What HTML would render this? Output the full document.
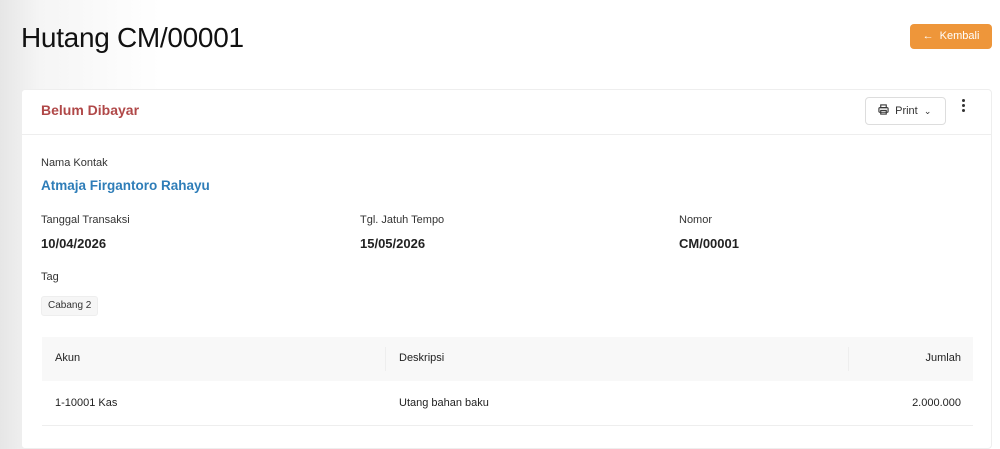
<!DOCTYPE html>
<html><head><meta charset="utf-8"><style>
*{margin:0;padding:0;box-sizing:border-box}
body{width:1000px;height:440px;overflow:hidden;font-family:"Liberation Sans",sans-serif;background:linear-gradient(90deg,#e6e6e6 0px,#f5f5f5 40px,#fff 160px);color:#222;position:relative}
.abs{position:absolute;white-space:nowrap}
h1{position:absolute;left:21px;top:22px;font-size:28px;font-weight:500;color:#111;letter-spacing:-0.3px}
.back{left:910px;top:24px;width:82px;height:25px;background:#ee963a;border-radius:4px;color:#fff;font-size:11px;line-height:25px;text-align:center}
.card{position:absolute;left:21px;top:89px;width:971px;height:360px;background:#fff;border:1px solid #eee;border-radius:4px}
.hdr{position:absolute;left:0;top:0;right:0;height:45px;border-bottom:1px solid #eee}
.lbl{font-size:11px;color:#333}
.val{font-size:13px;font-weight:bold;color:#222}
.print{left:843px;top:7px;width:81px;height:28px;border:1px solid #ddd;border-radius:4px;font-size:11px;line-height:26px;color:#333;padding-left:12px}
.thead{position:absolute;left:20px;top:247px;width:931px;height:44px;background:#f8f8f8}
.row{position:absolute;left:20px;top:291px;width:931px;height:45px;border-bottom:1px solid #eee}
.t{font-size:11px;color:#222}
</style></head><body>
<h1>Hutang CM/00001</h1>
<div class="abs back">&#8592;&nbsp; Kembali</div>
<div class="card">
 <div class="hdr">
  <div class="abs" style="left:19px;top:12px;font-size:14px;font-weight:bold;color:#b04848">Belum Dibayar</div>
  <div class="abs print"><svg width="11" height="11" viewBox="0 0 12 12" style="vertical-align:-1px" fill="none" stroke="#333" stroke-width="1.2"><rect x="3" y="1" width="6" height="3"/><rect x="1" y="4" width="10" height="5" rx="1"/><rect x="3" y="7" width="6" height="4"/></svg>&nbsp; Print &nbsp;<span style="font-size:9px">&#8964;</span></div>
  <div class="abs" style="left:940px;top:9px;width:4px">
   <div style="width:3px;height:3px;border-radius:50%;background:#333;margin-bottom:2px"></div>
   <div style="width:3px;height:3px;border-radius:50%;background:#333;margin-bottom:2px"></div>
   <div style="width:3px;height:3px;border-radius:50%;background:#333"></div>
  </div>
 </div>
 <div class="abs lbl" style="left:19px;top:67px">Nama Kontak</div>
 <div class="abs" style="left:19px;top:88px;font-size:13.5px;font-weight:bold;color:#2e7db8">Atmaja Firgantoro Rahayu</div>
 <div class="abs lbl" style="left:19px;top:124px">Tanggal Transaksi</div>
 <div class="abs lbl" style="left:338px;top:124px">Tgl. Jatuh Tempo</div>
 <div class="abs lbl" style="left:657px;top:124px">Nomor</div>
 <div class="abs val" style="left:19px;top:146px">10/04/2026</div>
 <div class="abs val" style="left:338px;top:146px">15/05/2026</div>
 <div class="abs val" style="left:657px;top:146px">CM/00001</div>
 <div class="abs lbl" style="left:19px;top:181px">Tag</div>
 <div class="abs" style="left:19px;top:206px;height:20px;padding:0 6px;background:#f6f6f6;border:1px solid #eee;border-radius:3px;font-size:10px;line-height:18px;color:#333">Cabang 2</div>
 <div class="thead">
  <div class="abs t" style="left:13px;top:15px">Akun</div>
  <div class="abs" style="left:343px;top:10px;width:1px;height:24px;background:#eee"></div>
  <div class="abs t" style="left:357px;top:15px">Deskripsi</div>
  <div class="abs" style="left:806px;top:10px;width:1px;height:24px;background:#eee"></div>
  <div class="abs t" style="right:12px;top:15px">Jumlah</div>
 </div>
 <div class="row">
  <div class="abs t" style="left:13px;top:16px">1-10001 Kas</div>
  <div class="abs t" style="left:357px;top:16px">Utang bahan baku</div>
  <div class="abs t" style="right:12px;top:16px">2.000.000</div>
 </div>
</div>
</body></html>
